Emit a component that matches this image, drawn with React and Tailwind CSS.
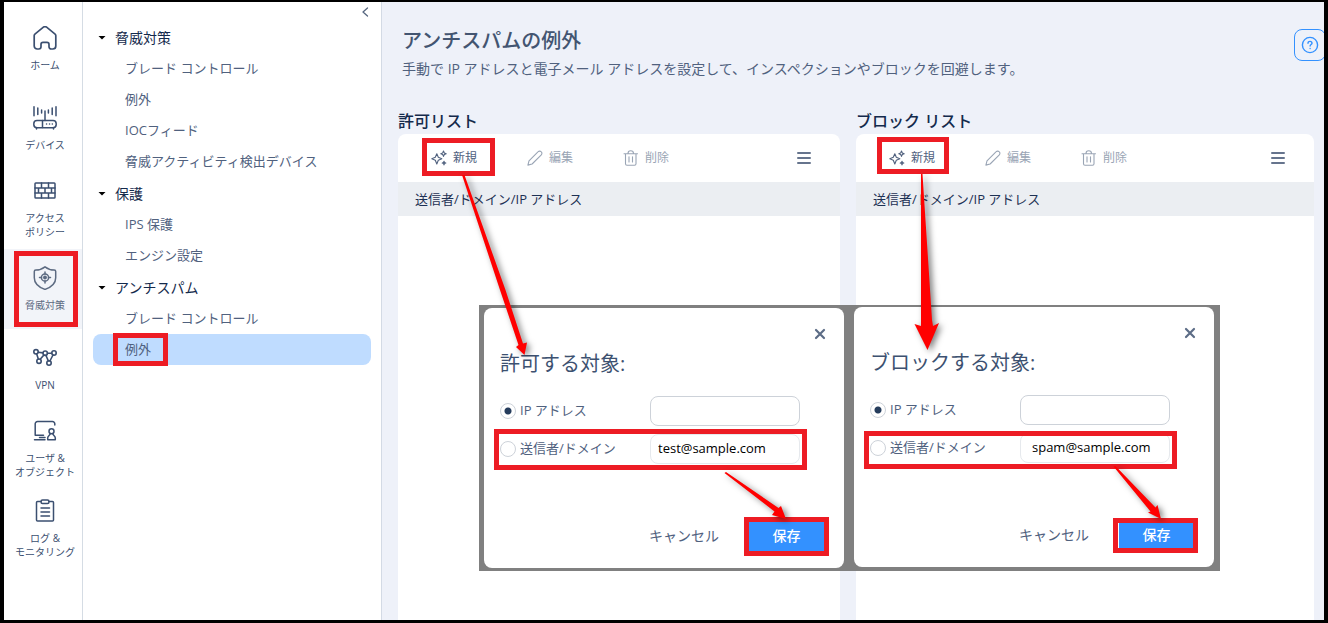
import React from "react";

function Svg({ children, className = "size-6", box = "0 0 24 24", width = 1.5 }) {
  return (
    <svg
      viewBox={box}
      className={className}
      fill="none"
      stroke="currentColor"
      strokeWidth={width}
      strokeLinecap="round"
      strokeLinejoin="round"
      aria-hidden="true"
    >
      {children}
    </svg>
  );
}

const HomeIcon = () => (
  <Svg width={1.7}>
    <path d="M1.200 9.600q0-.9.700-1.500L10.400 1.200a2.600 2.600 0 0 1 3.200 0l8.500 6.900q.7.600.7 1.500v10.400a3 3 0 0 1-3 3h-1.600a2.200 2.200 0 0 1-2.200-2.200v-2.400a2 2 0 0 0-2-2h-4a2 2 0 0 0-2 2v2.400A2.200 2.200 0 0 1 5.800 23H4.200a3 3 0 0 1-3-3z" />
  </Svg>
);

const DeviceIcon = () => (
  <Svg>
    <rect x=".8" y="14.500" width="22.400" height="7.200" rx="3.200" />
    <path d="M9.500 14.500v7M12 14.500V5M3.500 22v1M20.500 22v1M1 .8v9M4.800 2v6.600M8.600 4v3M15.400 4v3M19.200 2v6.600M23 .8v9" />
    <path d="M13.500 18.100h.1M16.500 18.100h.1M19.300 18.100h.1" />
  </Svg>
);

const WallIcon = () => (
  <Svg>
    <rect x="2" y="4" width="20" height="15" rx=".8" />
    <path d="M2 9h20M2 14h20M8.500 4v5M15.500 4v5M5.500 9v5M12 9v5M18.500 9v5M8.500 14v5M15.500 14v5" />
  </Svg>
);

const ShieldIcon = () => (
  <Svg>
    <path d="M12 .8c2.600 2 6 3.200 9.200 3.200.9 0 1.500.6 1.500 1.500v6.200c0 5.200-4 9.300-10.700 11.700C5.300 21 1.300 16.900 1.300 11.700V5.500C1.300 4.600 1.900 4 2.800 4 6 4 9.400 2.800 12 .8Z" />
    <circle cx="12" cy="11.500" r="3.600" />
    <circle cx="12" cy="11.500" r="1.200" fill="currentColor" />
    <path d="M12 6v2M12 15v2M6.500 11.500h2M15.500 11.500h2" />
  </Svg>
);

const VpnIcon = () => (
  <Svg width={1.6}>
    <circle cx="3" cy="5.800" r="2.200" />
    <circle cx="12.200" cy="7.200" r="2.200" />
    <circle cx="21" cy="7" r="2.200" />
    <circle cx="6" cy="15.200" r="2.200" />
    <circle cx="16" cy="17" r="2.200" />
    <path d="m5.200 6.200 4.800.700M14.400 7.200h4.400M3.700 8l1.600 5M7.200 13.300l3.700-4.300M12.900 9.300l2.400 5.600M16.900 15l3.100-6" />
  </Svg>
);

const UserIcon = () => (
  <Svg>
    <path d="M21.800 6V4.800A2.300 2.300 0 0 0 19.500 2.500H4.500A2.300 2.300 0 0 0 2.200 4.800v11.400h6.500M8 16.200h2.500M6.500 18.500h5.500M1.500 20.800h10.500" />
    <circle cx="18.500" cy="12.300" r="2.500" />
    <path d="M17.300 14.700c-.2 1.700-2.600 2.200-2.600 4.300v1.800h7.600V19c0-2.100-2.400-2.600-2.600-4.300" />
  </Svg>
);

const LogIcon = () => (
  <Svg>
    <path d="M8 2.500H4.500a1 1 0 0 0-1 1V21a1 1 0 0 0 1 1h15a1 1 0 0 0 1-1V3.500a1 1 0 0 0-1-1H16" />
    <path d="M8 2.700c0-1 .6-1.600 1.500-1.600h5c.9 0 1.500.6 1.500 1.600s-.6 1.800-1.500 1.800h-5C8.600 4.500 8 3.700 8 2.700ZM8 9h8.500M8 13h8.500M8 17h8.500" />
  </Svg>
);

const SparkleIcon = () => (
  <Svg box="0 0 16 16" className="size-4" width={1.1}>
    <path d="M5.800 3.800 7.300 7.300l3.500 1.500-3.500 1.500-1.500 3.700-1.500-3.700L.8 8.800l3.500-1.500zM12.500 1l.8 1.900 1.900.8-1.900.8-.8 1.900-.8-1.900-1.900-.8 1.900-.8zM13 11.300l.5 1.300 1.300.5-1.300.5-.5 1.300-.5-1.300-1.300-.5 1.300-.5z" />
  </Svg>
);

const PencilIcon = () => (
  <Svg box="0 0 16 16" className="size-4" width={1.1}>
    <path d="M.9 15.100 2 10.900 11.200 1.700a2 2 0 0 1 2.900 0l.2.200a2 2 0 0 1 0 2.900L5.100 14z" />
  </Svg>
);

const TrashIcon = () => (
  <Svg box="0 0 16 16" className="size-4" width={1.1}>
    <path d="M1 3.700h13.500M5 3.500C5 1.800 6 .8 7.700.8s2.800 1 2.800 2.700M2.500 3.900v9.800c0 .9.600 1.600 1.500 1.600h7.500c.9 0 1.500-.7 1.500-1.600V3.900M6 6.800v5.200M9.500 6.800v5.200" />
  </Svg>
);

const railItems = [
  { lines: ["ホーム"], Icon: HomeIcon },
  { lines: ["デバイス"], Icon: DeviceIcon },
  { lines: ["アクセス", "ポリシー"], Icon: WallIcon },
  { lines: ["脅威対策"], Icon: ShieldIcon, active: true },
  { lines: ["VPN"], Icon: VpnIcon },
  { lines: ["ユーザ &", "オブジェクト"], Icon: UserIcon },
  { lines: ["ログ &", "モニタリング"], Icon: LogIcon },
];

const menu = [
  {
    title: "脅威対策",
    items: ["ブレード コントロール", "例外", "IOCフィード", "脅威アクティビティ検出デバイス"],
  },
  { title: "保護", items: ["IPS 保護", "エンジン設定"] },
  { title: "アンチスパム", items: ["ブレード コントロール", "例外"], selected: 1 },
];

function Rail() {
  return (
    <nav className="w-[79px] shrink-0 border-r border-[#d5dce4] bg-white pt-[7px]">
      {railItems.map(({ lines, Icon, active }) => (
        <a
          key={lines[0]}
          href="#"
          className={
            "flex h-20 flex-col items-center justify-center gap-2 pl-1 text-[10px] leading-[14px] whitespace-nowrap " +
            (active ? "bg-[#f2f4f9] text-[#5d6b82]" : "text-[#3b4f70]")
          }
        >
          <Icon />
          <span className="text-center">
            {lines.map((line) => (
              <span key={line} className="block">
                {line}
              </span>
            ))}
          </span>
        </a>
      ))}
    </nav>
  );
}

function Menu() {
  return (
    <aside className="w-[299px] shrink-0 border-r border-[#d3dae5] bg-white px-[10px]">
      <div className="flex h-[19px] items-center justify-end">
        <button aria-label="メニューを閉じる" className="text-[#55657f]">
          <Svg box="0 0 12 12" className="size-3" width={1.3}>
            <path d="M8.500 2 4 6l4.500 4" />
          </Svg>
        </button>
      </div>
      {menu.map((group) => (
        <section key={group.title}>
          <button className="flex h-8 w-full items-center gap-[9px] pt-px pl-[5px] text-sm text-[#142a4c]">
            <svg viewBox="0 0 8 8" className="size-2 text-black" aria-hidden="true">
              <path d="M.5 2h7L4 5.500z" fill="currentColor" />
            </svg>
            {group.title}
          </button>
          <ul>
            {group.items.map((item, i) => (
              <li key={item}>
                <a
                  href="#"
                  className={
                    "flex h-[31px] items-center rounded-lg pt-px pl-8 text-[13px] text-[#50617e] " +
                    (group.selected === i ? "bg-[#bfdcff]" : "")
                  }
                >
                  {item}
                </a>
              </li>
            ))}
          </ul>
        </section>
      ))}
    </aside>
  );
}

function ListPanel({ title }) {
  return (
    <section className="flex min-w-0 flex-col">
      <h2 className="h-[25px] text-base leading-6 font-medium text-[#142a4c]">{title}</h2>
      <div className="grow rounded-t-lg bg-white">
        <div className="flex h-12 items-center pr-[28px] pl-[33px] text-xs text-[#9aa5b5]">
          <button className="flex w-24 items-center gap-[6px] text-[#50617e]">
            <SparkleIcon />
            新規
          </button>
          <button className="flex w-24 items-center gap-[6px]">
            <PencilIcon />
            編集
          </button>
          <button className="flex w-24 items-center gap-[6px]">
            <TrashIcon />
            削除
          </button>
          <button aria-label="オプション" className="ml-auto text-[#66748d]">
            <Svg box="0 0 16 16" className="size-4" width={2}>
              <path d="M2 3h12M2 8h12M2 13h12" />
            </Svg>
          </button>
        </div>
        <table className="w-full">
          <thead>
            <tr className="h-[34px] bg-[#ebeef2]">
              <th className="px-[17px] pt-px text-left text-[13px] font-normal text-[#1d3154]">
                送信者/ドメイン/IP アドレス
              </th>
            </tr>
          </thead>
        </table>
      </div>
    </section>
  );
}

const radioClass =
  "size-4 shrink-0 appearance-none rounded-full border border-[#cdd2d9] bg-white checked:bg-[radial-gradient(circle,#253c5c_3px,transparent_4px)]";
const inputClass =
  "ml-auto h-[30px] w-[150px] rounded-lg border pb-[2px] text-[13px] text-black outline-none";

function Dialog({ name, title, value, pad }) {
  return (
    <div role="dialog" aria-label={title} className="flex h-[260px] w-[360px] flex-col rounded-lg bg-white px-4 pb-[17px]">
      <div className="flex h-[42px] items-end justify-end pr-px pb-[9px]">
        <button aria-label="閉じる" className="text-[#5c6c86]">
          <Svg box="0 0 14 14" className="size-[14px]" width={2.2}>
            <path d="m3 3 8 8M11 3l-8 8" />
          </Svg>
        </button>
      </div>
      <h3 className="text-xl leading-7 text-[#3d5170]">{title}</h3>
      <div className="mt-[18px] flex flex-col gap-2 pr-7 text-[13px] text-[#50617e]">
        <div className="flex items-center gap-1">
          <input type="radio" id={name + "-ip"} name={name} defaultChecked className={radioClass} />
          <label htmlFor={name + "-ip"}>IP アドレス</label>
          <input type="text" aria-label="IP アドレス" className={inputClass + " border-[#cdd2d9] px-2"} />
        </div>
        <div className="flex items-center gap-1">
          <input type="radio" id={name + "-domain"} name={name} className={radioClass} />
          <label htmlFor={name + "-domain"}>送信者/ドメイン</label>
          <input
            type="text"
            aria-label="送信者/ドメイン"
            defaultValue={value}
            className={inputClass + " border-[#e6e9ed] " + pad}
          />
        </div>
      </div>
      <div className="mt-auto flex items-center justify-end gap-[30px] pr-1 text-sm">
        <button className="text-[#50617e]">キャンセル</button>
        <button className="h-[30px] w-[75px] bg-[#3391ff] font-medium text-white">保存</button>
      </div>
    </div>
  );
}

const frames = [
  [14, 251, 78, 327],
  [113, 333, 168, 366],
  [422, 138, 495, 176],
  [877, 137, 949, 174],
  [494, 429, 807, 470],
  [744, 517, 829, 556],
  [864, 431, 1177, 469],
  [1113, 518, 1198, 553],
];

const arrows = [
  "462,175 464.500,175 505.500,290 523,343.500 527,342.500 524.500,355 516,347 518.500,345 500,290",
  "921,174 922.500,174 932,320 933,326 939,323 927.500,350 914.500,324 921,326",
  "724.500,473 726,472 778.500,508 781,506 786,519 772,515 774.500,511.500",
  "1113.500,466.500 1115.500,466 1155.500,507.500 1157.500,505 1161,519 1148,512.500 1150.500,511.500",
];

function Annotations() {
  return (
    <svg
      width="1328"
      height="623"
      viewBox="0 0 1328 623"
      className="pointer-events-none absolute top-0 left-0"
      aria-hidden="true"
    >
      {frames.map(([x1, y1, x2, y2]) => (
        <rect
          key={x1 + "-" + y1}
          x={x1 + 2.5}
          y={y1 + 2.5}
          width={x2 - x1 - 5}
          height={y2 - y1 - 5}
          fill="none"
          stroke="#ed1c24"
          strokeWidth="5"
        />
      ))}
      <g fill="#ff0000" className="drop-shadow-[3px_2px_3px_rgba(0,0,0,0.5)]">
        {arrows.map((points) => (
          <polygon key={points} points={points} />
        ))}
      </g>
    </svg>
  );
}

export default function App() {
  return (
    <div className="relative flex min-h-screen bg-black px-1 pt-[2px] pb-[3px] font-['Open_Sans','Noto_Sans_CJK_JP',sans-serif]">
      <Rail />
      <Menu />
      <main className="flex min-w-0 grow flex-col overflow-hidden bg-[#eef1f9] pl-4">
        <header className="flex items-start justify-between pt-[23px] pl-1">
          <div>
            <h1 className="text-xl leading-8 font-medium text-[#435571]">アンチスパムの例外</h1>
            <p className="text-sm leading-6 text-[#50617e]">
              手動で IP アドレスと電子メール アドレスを設定して、インスペクションやブロックを回避します。
            </p>
          </div>
          <button
            aria-label="ヘルプ"
            className="mt-1 -mr-[2px] flex size-8 shrink-0 items-center justify-center rounded-lg border border-[#3391ff] text-[#3391ff]"
          >
            <Svg box="0 0 18 18" className="size-[18px]" width={1.4}>
              <circle cx="9" cy="9" r="7.600" />
              <path d="M7 7.300C7 6 7.900 5.400 9 5.400s2 .7 2 1.800c0 1.300-1.900 1.400-1.900 2.800M9.100 12.500h.01" />
            </Svg>
          </button>
        </header>
        <div className="mt-7 grid grow grid-cols-[442fr_458fr] gap-4 pr-[10px]">
          <ListPanel title="許可リスト" />
          <ListPanel title="ブロック リスト" />
        </div>
      </main>
      <div className="absolute top-[305px] left-[479px] flex bg-[#808080]">
        <div className="pt-[3px] pr-[5px] pb-[3px] pl-[5px]">
          <Dialog name="allow" title="許可する対象:" value="test@sample.com" pad="px-[7px]" />
        </div>
        <div className="pt-[2px] pr-[6px] pb-[4px] pl-[5px]">
          <Dialog name="block" title="ブロックする対象:" value="spam@sample.com" pad="px-[11px]" />
        </div>
      </div>
      <Annotations />
    </div>
  );
}
